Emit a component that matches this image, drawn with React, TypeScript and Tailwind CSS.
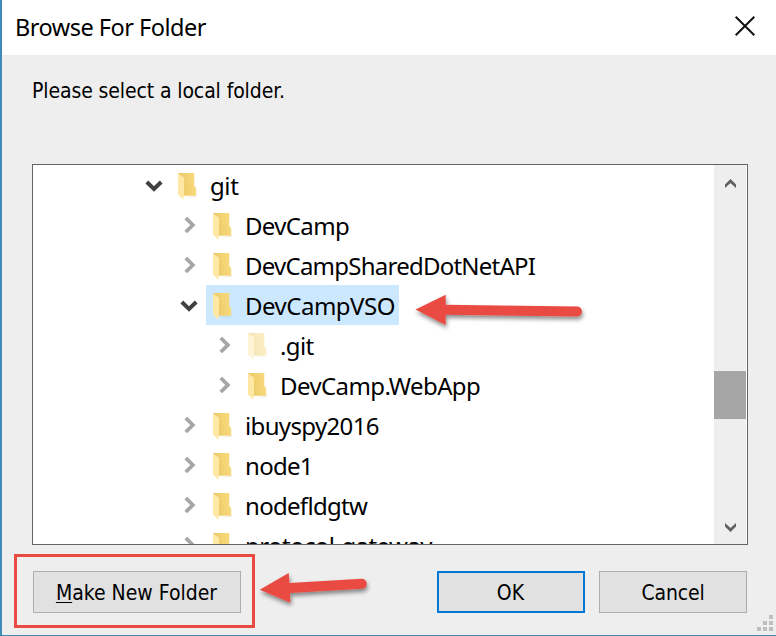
const TREE_FONT = "font-['Noto_Sans','Open_Sans',sans-serif]";
const DIALOG_FONT = "font-['DejaVu_Sans_Condensed','DejaVu_Sans',sans-serif] [font-stretch:condensed]";

type Node = { name: string; level: number; open?: boolean; selected?: boolean; hidden?: boolean; spacing: string };

const nodes: Node[] = [
  { name: 'git', level: 0, open: true, spacing: 'tracking-[-0.4px]' },
  { name: 'DevCamp', level: 1, spacing: 'tracking-[-0.65px]' },
  { name: 'DevCampSharedDotNetAPI', level: 1, spacing: 'tracking-[-0.76px]' },
  { name: 'DevCampVSO', level: 1, open: true, selected: true, spacing: 'tracking-[-0.5px]' },
  { name: '.git', level: 2, hidden: true, spacing: 'tracking-[-0.6px]' },
  { name: 'DevCamp.WebApp', level: 2, spacing: 'tracking-[-0.6px]' },
  { name: 'ibuyspy2016', level: 1, spacing: 'tracking-[-0.65px]' },
  { name: 'node1', level: 1, spacing: 'tracking-[-0.7px]' },
  { name: 'nodefldgtw', level: 1, spacing: 'tracking-[-0.7px]' },
  { name: 'protocol-gateway', level: 1, spacing: 'tracking-[-0.6px]' },
];

const indents = ['pl-[109px]', 'pl-[144px]', 'pl-[179px]'];

function Expander({ open }: { open?: boolean }) {
  return (
    <svg width="24" height="40" viewBox="0 0 24 40" fill="none" className="shrink-0">
      {open ? (
        <path d="M4.8 17 L12 24 L19.2 17" stroke="#404040" strokeWidth="3.9" />
      ) : (
        <path d="M8.8 13 L15.8 20 L8.8 27" stroke="#a6a6a6" strokeWidth="3.8" />
      )}
    </svg>
  );
}

function Folder({ faded }: { faded?: boolean }) {
  return (
    <svg width="20" height="28" viewBox="0 0 20 28" className={faded ? 'shrink-0 opacity-45' : 'shrink-0'}>
      <defs>
        <linearGradient id="back" x1="0" x2="1" y1="0.6" y2="0.4">
          <stop offset="0.2" stopColor="#eccb68" />
          <stop offset="0.6" stopColor="#f3d373" />
          <stop offset="1" stopColor="#f7da80" />
        </linearGradient>
      </defs>
      <path d="M14 23 L19.5 22.4 L19 24 L7 25Z" fill="#000" opacity="0.06" />
      <path d="M0.2 0 H16.3 V13.4 H17.2 L18.2 16 V22.8 H6 L0.2 20Z" fill="url(#back)" />
      <path d="M0 0.4 L6 4.6 V20.5 L5.2 26.8 L0 21.6Z" fill="#ffe8a6" />
    </svg>
  );
}

function ScrollArrow({ down }: { down?: boolean }) {
  return (
    <svg width="32" height="36" viewBox="0 0 32 36" className="shrink-0">
      <path
        d={down ? 'M11 15 L16.5 20 L22 15 V18.6 L16.5 24 L11 18.6Z' : 'M11 23 L16.5 18 L22 23 V19.4 L16.5 14 L11 19.4Z'}
        fill="#5f5f5f"
      />
    </svg>
  );
}

function Row({ node }: { node: Node }) {
  return (
    <div className={`flex h-10 shrink-0 items-center ${indents[node.level]}`}>
      <Expander open={node.open} />
      <div
        className={`ml-[5px] flex h-10 items-start ${node.selected ? 'w-[193px] bg-[#cce8ff]' : ''}`}
      >
        <span className="flex w-[39px] shrink-0 pl-[7px] pt-2">
          <Folder faded={node.hidden} />
        </span>
        <span className={`whitespace-nowrap pt-px text-[24px] leading-10 ${TREE_FONT} ${node.spacing}`}>
          {node.name}
        </span>
      </div>
    </div>
  );
}

export default function App() {
  return (
    <div className="relative flex h-[636px] w-[776px] flex-col overflow-hidden border-b border-l-2 border-b-[#3c8cb0] border-l-[#3c8cb4] bg-[#eeeeee] text-black">
      <header className="flex h-[55px] shrink-0 items-center justify-between bg-white pl-[13px] pr-5">
        <h1 className={`pt-px text-[23.5px] leading-none ${TREE_FONT} tracking-[-0.5px]`}>Browse For Folder</h1>
        <svg width="22" height="22" viewBox="0 0 22 22" className="-mt-[3px]">
          <path d="M1.7 1.7 L20.3 20.3 M20.3 1.7 L1.7 20.3" stroke="#111" strokeWidth="2" />
        </svg>
      </header>

      <p className={`h-[109px] shrink-0 pl-[30px] pt-6 text-[21px] leading-6 tracking-[-0.11px] ${DIALOG_FONT}`}>
        Please select a local folder.
      </p>

      <div className="ml-[30px] flex h-[381px] w-[716px] shrink-0 overflow-hidden border border-[#646464] bg-white">
        <div className="flex min-w-0 flex-1 flex-col overflow-hidden">
          {nodes.map((node) => (
            <Row key={node.name} node={node} />
          ))}
        </div>
        <div className="mr-px flex w-8 shrink-0 flex-col bg-[#eeeeee]">
          <ScrollArrow />
          <div className="mt-[170px] h-12 bg-[#a6a6a6]" />
          <div className="flex-1" />
          <ScrollArrow down />
        </div>
      </div>

      <footer className={`flex pl-[31px] pt-[26px] text-[21px] ${DIALOG_FONT}`}>
        <button className="h-[42px] w-52 border border-[#adadad] bg-[#e1e1e1] pr-px pt-0.5 leading-none">
          <span className="underline decoration-1 underline-offset-2">M</span>ake New Folder
        </button>
        <button className="ml-[196px] h-[42px] w-[148px] border-2 border-[#0078d7] bg-[#e1e1e1] pr-px pt-0.5 leading-none">
          OK
        </button>
        <button className="ml-[14px] h-[42px] w-[148px] border border-[#adadad] bg-[#e1e1e1] pt-0.5 leading-none tracking-[-0.15px]">
          Cancel
        </button>
      </footer>

      <div className="absolute left-3 top-[554px] h-[74px] w-[241px] border-3 border-[#e94b43]" />

      <svg width="776" height="636" viewBox="0 0 776 636" className="pointer-events-none absolute -left-0.5 top-0">
        <defs>
          <filter id="shadow" x="-10%" y="-30%" width="120%" height="180%">
            <feDropShadow dx="1" dy="3" stdDeviation="2" floodColor="#000" floodOpacity="0.45" />
          </filter>
        </defs>
        <g fill="#e94b43" filter="url(#shadow)">
          <path d="M415.5 309.5 L445.7 294.7 V304.8 L577 306.5 A5 5 0 0 1 577 316.5 L445.7 314.8 V325Z" />
          <path d="M259.7 589.7 L288.7 573 L289.5 583 L361.5 578.8 A5 5 0 0 1 362 588.8 L290 593 L290.5 602.7Z" />
        </g>
        <g fill="#bfbfbf">
          <path d="M769 615h4v4h-4z M763 621h4v4h-4z M769 621h4v4h-4z M757 627h4v4h-4z M763 627h4v4h-4z M769 627h4v4h-4z" />
        </g>
      </svg>
    </div>
  );
}
